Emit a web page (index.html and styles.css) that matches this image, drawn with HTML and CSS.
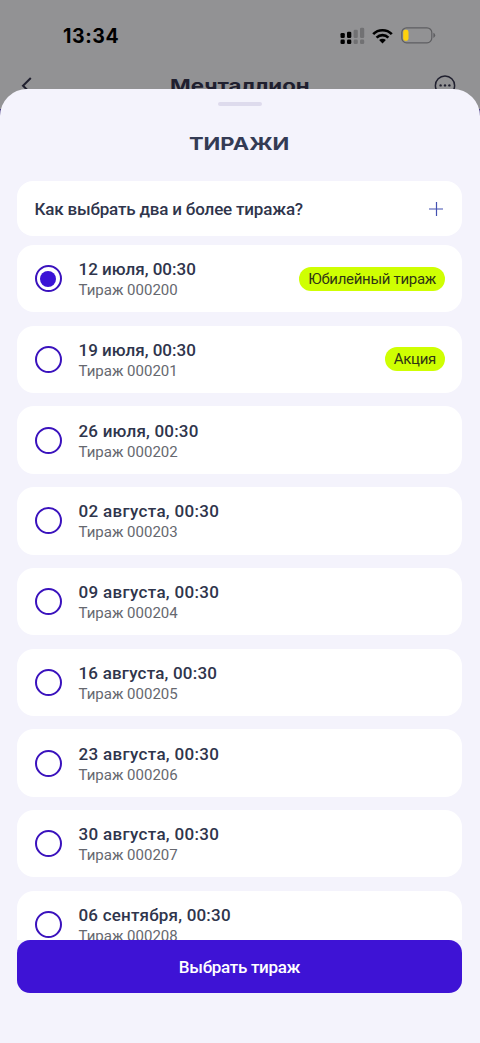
FILE: index.html
```html
<!DOCTYPE html>
<html lang="ru">
<head>
<meta charset="utf-8">
<meta name="viewport" content="width=device-width">
<title>Тиражи</title>
<link rel="stylesheet" href="styles.css">
</head>
<body>
<div class="screen">
  <header class="backdrop">
    <div class="status">
      <span class="clock">13:34</span>
      <div class="indicators">
        <svg class="signal" width="25" height="18" viewBox="0 0 25 18"><g fill="#000"><rect x="0.5" y="6" width="4.3" height="5" rx="1.3"/><rect x="7" y="4.7" width="4.3" height="6.3" rx="1.3"/><rect x="0.5" y="12.6" width="4.3" height="4.4" rx="1.3"/><rect x="7" y="12.6" width="4.3" height="4.4" rx="1.3"/></g><g fill="#717173"><rect x="13.6" y="2.7" width="4.2" height="8.3" rx="1.3"/><rect x="20" y="0.8" width="4.2" height="10.2" rx="1.3"/><rect x="13.6" y="12.6" width="4.2" height="4.4" rx="1.3"/><rect x="20" y="12.6" width="4.2" height="4.4" rx="1.3"/></g></svg>
        <svg class="wifi" width="21" height="16" viewBox="0 0 21 16"><g fill="none" stroke="#000" stroke-width="2.7"><path d="M1.2 6.1a13.2 13.2 0 0 1 18.6 0"/><path d="M4.6 9.6a8.4 8.4 0 0 1 11.8 0"/></g><path d="M7.1 12.1a4.9 4.9 0 0 1 6.8 0L10.5 15.6Z" fill="#000"/></svg>
        <svg class="battery" width="35" height="17" viewBox="0 0 35 17"><rect x="0.8" y="0.8" width="30" height="15" rx="4.8" fill="none" stroke="#5e5e61" stroke-width="1.2"/><rect x="2.2" y="2.8" width="5.3" height="11" rx="2.2" fill="#ffd20c"/><path d="M32.4 5.7q1.8.8 1.8 2.6t-1.8 2.6Z" fill="#5e5e61"/></svg>
      </div>
    </div>
    <div class="navbar">
      <svg class="back" width="12" height="18" viewBox="0 0 12 18"><path d="M9.8 1 2 8.7l7.8 7.7" fill="none" stroke="#20202f" stroke-width="2"/></svg>
      <span class="game">Мечталлион</span>
      <svg class="more" width="22" height="22" viewBox="0 0 22 22"><circle cx="11" cy="10.6" r="9.6" fill="none" stroke="#20202f" stroke-width="1.5"/><g fill="#20202f"><circle cx="6.6" cy="10.4" r="1.2"/><circle cx="11" cy="10.4" r="1.2"/><circle cx="15.4" cy="10.4" r="1.2"/></g></svg>
    </div>
  </header>
  <main class="sheet">
    <div class="handle"></div>
    <h1 class="title">ТИРАЖИ</h1>
    <div class="question"><span class="ask">Как выбрать два и более тиража?</span>
      <svg width="16" height="16" viewBox="0 0 16 16"><path d="M8.5 1v14M1 8h14" stroke="#4351b1" stroke-width="1.2"/></svg></div>
    <div class="draws">
      <div class="draw"><span class="radio checked"></span><div class="info"><b class="date">12 июля, 00:30</b><span class="number">Тираж 000200</span></div><span class="badge">Юбилейный тираж</span></div>
      <div class="draw"><span class="radio"></span><div class="info"><b class="date">19 июля, 00:30</b><span class="number">Тираж 000201</span></div><span class="badge">Акция</span></div>
      <div class="draw"><span class="radio"></span><div class="info"><b class="date roomy">26 июля, 00:30</b><span class="number">Тираж 000202</span></div></div>
      <div class="draw"><span class="radio"></span><div class="info"><b class="date wide">02 августа, 00:30</b><span class="number">Тираж 000203</span></div></div>
      <div class="draw"><span class="radio"></span><div class="info"><b class="date wide">09 августа, 00:30</b><span class="number">Тираж 000204</span></div></div>
      <div class="draw"><span class="radio"></span><div class="info"><b class="date roomy">16 августа, 00:30</b><span class="number">Тираж 000205</span></div></div>
      <div class="draw"><span class="radio"></span><div class="info"><b class="date wide">23 августа, 00:30</b><span class="number">Тираж 000206</span></div></div>
      <div class="draw"><span class="radio"></span><div class="info"><b class="date wide">30 августа, 00:30</b><span class="number">Тираж 000207</span></div></div>
      <div class="draw"><span class="radio"></span><div class="info"><b class="date roomy">06 сентября, 00:30</b><span class="number">Тираж 000208</span></div></div>
    </div>
    <button class="choose">Выбрать тираж</button>
  </main>
</div>
</body>
</html>
```
FILE: styles.css
```css
* { box-sizing: border-box; }
body { margin: 0; font-family: Roboto, "Noto Sans", sans-serif; color: #2f354c; }
.screen { width: 480px; height: 1043px; overflow: hidden; display: flex; flex-direction: column; background: linear-gradient(#929294 109px, #3a2b78 109px); }
.backdrop { height: 89px; flex: none; overflow: hidden; }
.status { height: 71px; padding: 0 44px 0 63px; display: flex; align-items: center; justify-content: space-between; }
.clock { font: 700 19.5px/24px Inter, sans-serif; color: #000; letter-spacing: .6px; }
.indicators { display: flex; align-items: center; }
.signal { margin-right: 7px; }
.wifi { margin-right: 8px; }
.navbar { height: 30px; padding: 0 24px 0 21px; display: flex; align-items: center; justify-content: space-between; }
.game { font: 700 18px/24px Inter, sans-serif; color: #20202f; width: 140px; white-space: nowrap; transform: scaleX(1.235); transform-origin: left; margin-left: 13px; }
.sheet { flex: 1; min-height: 0; background: #f4f3fc; border-radius: 27px 27px 0 0; padding: 13px 18px 0 17px; display: flex; flex-direction: column; }
.handle { width: 44px; height: 4px; border-radius: 2px; background: #dedbed; margin: 0 auto; flex: none; }
.title { margin: 26px auto 25px; font: 700 18px/24px Inter, sans-serif; height: 24px; color: #343b54; transform: scaleX(1.22); flex: none; }
.question { height: 55px; flex: none; border-radius: 16px; background: #fff; display: flex; align-items: center; justify-content: space-between; padding: 0 18px 0 17.5px; }
.ask { font-size: 17px; font-weight: 500; letter-spacing: -.18px; }
.draws { margin-top: 9px; height: 695px; flex: none; overflow: hidden; display: flex; flex-direction: column; gap: 13.4px; }
.draw { height: 67.35px; flex: none; border-radius: 17px; background: #fff; display: flex; align-items: center; padding: 0 17px 0 17.5px; }
.radio { width: 27px; height: 27px; border: 2px solid #3a12bd; border-radius: 50%; flex: none; display: flex; align-items: center; justify-content: center; }
.checked::before { content: ""; width: 16px; height: 16px; border-radius: 50%; background: #3b12d6; }
.info { margin-left: 17px; padding-top: 2px; display: flex; flex-direction: column; gap: 1px; }
.date { font-size: 17px; line-height: 20px; font-weight: 500; }
.roomy { letter-spacing: .2px; }
.wide { letter-spacing: .33px; }
.number { font-size: 15px; line-height: 20px; color: #66686f; }
.badge { margin-left: auto; height: 24px; padding: 0 9px; border-radius: 12px; background: #cfff02; color: #303615; font-size: 15px; line-height: 24px; letter-spacing: -.3px; }
.choose { position: relative; margin-top: -.5px; height: 53px; flex: none; border: 0; border-radius: 13px; background: #3e13d5; color: #fff; font: 500 17px/24px Roboto, sans-serif; letter-spacing: -.3px; padding-top: 2px; }
```
